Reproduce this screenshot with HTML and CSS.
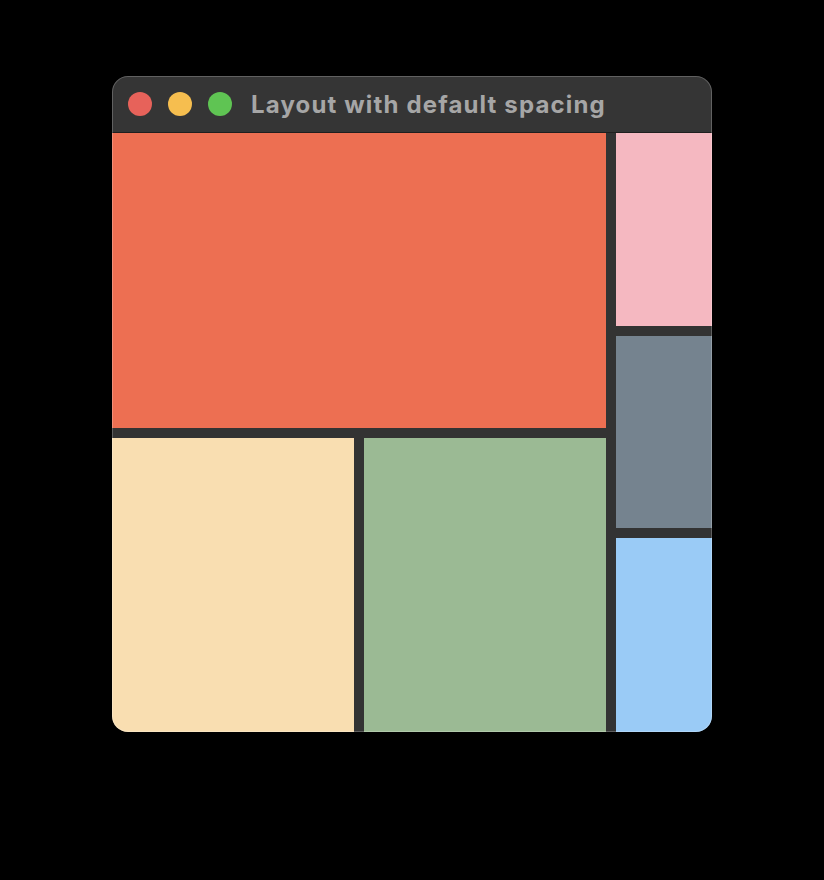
FILE: index.html
```html
<!DOCTYPE html>
<html>
<head>
<meta charset="utf-8">
<link rel="stylesheet" href="styles.css">
</head>
<body>
<div class="window">
  <div class="titlebar">
    <div class="lights">
      <span class="light red"></span>
      <span class="light yellow"></span>
      <span class="light green"></span>
    </div>
    <div class="title">Layout with default spacing</div>
  </div>
  <div class="content">
    <div class="left">
      <div class="tile orange"></div>
      <div class="row">
        <div class="tile wheat"></div>
        <div class="tile sage"></div>
      </div>
    </div>
    <div class="right">
      <div class="tile pink"></div>
      <div class="tile slate"></div>
      <div class="tile sky"></div>
    </div>
  </div>
</div>
</body>
</html>
```
FILE: styles.css
```css
html, body {
  margin: 0;
  padding: 0;
  background: #000;
  width: 824px;
  height: 880px;
  overflow: hidden;
}
body {
  padding-top: 76px;
  padding-left: 112px;
  box-sizing: border-box;
}
.window {
  width: 600px;
  height: 656px;
  border-radius: 16px;
  overflow: hidden;
  background: #333333;
  display: flex;
  flex-direction: column;
  position: relative;
}
.window::after {
  content: "";
  position: absolute;
  inset: 0;
  border-radius: 16px;
  box-shadow: inset 0 0 0 1px rgba(255,255,255,0.22);
  pointer-events: none;
}
.titlebar {
  height: 56px;
  flex: none;
  display: flex;
  align-items: center;
  border-bottom: 1px solid #1f1f1f;
  background: #353535;
}
.lights {
  display: flex;
  gap: 16px;
  padding-left: 16px;
}
.light {
  width: 24px;
  height: 24px;
  border-radius: 50%;
  display: block;
}
.red { background: #e7625a; }
.yellow { background: #f6be4f; }
.green { background: #5fc453; }
.title {
  margin-left: 19px;
  font-family: Inter, "Noto Sans", sans-serif;
  font-weight: 700;
  font-size: 24px;
  letter-spacing: 1.15px;
  color: #a6a6a6;
}
.content {
  flex: 1;
  display: flex;
  gap: 10px;
}
.left {
  width: 494px;
  display: flex;
  flex-direction: column;
  gap: 10px;
}
.orange {
  height: 295px;
  background: #ed6f52;
}
.row {
  flex: 1;
  display: flex;
  gap: 10px;
}
.row .tile { flex: 1; }
.wheat { background: #f9deb1; }
.sage { background: #9bba94; }
.right {
  flex: 1;
  display: flex;
  flex-direction: column;
  gap: 10px;
}
.pink { height: 193px; background: #f5b8c1; }
.slate { height: 192px; background: #75838f; }
.sky { flex: 1; background: #9acbf6; }
```
